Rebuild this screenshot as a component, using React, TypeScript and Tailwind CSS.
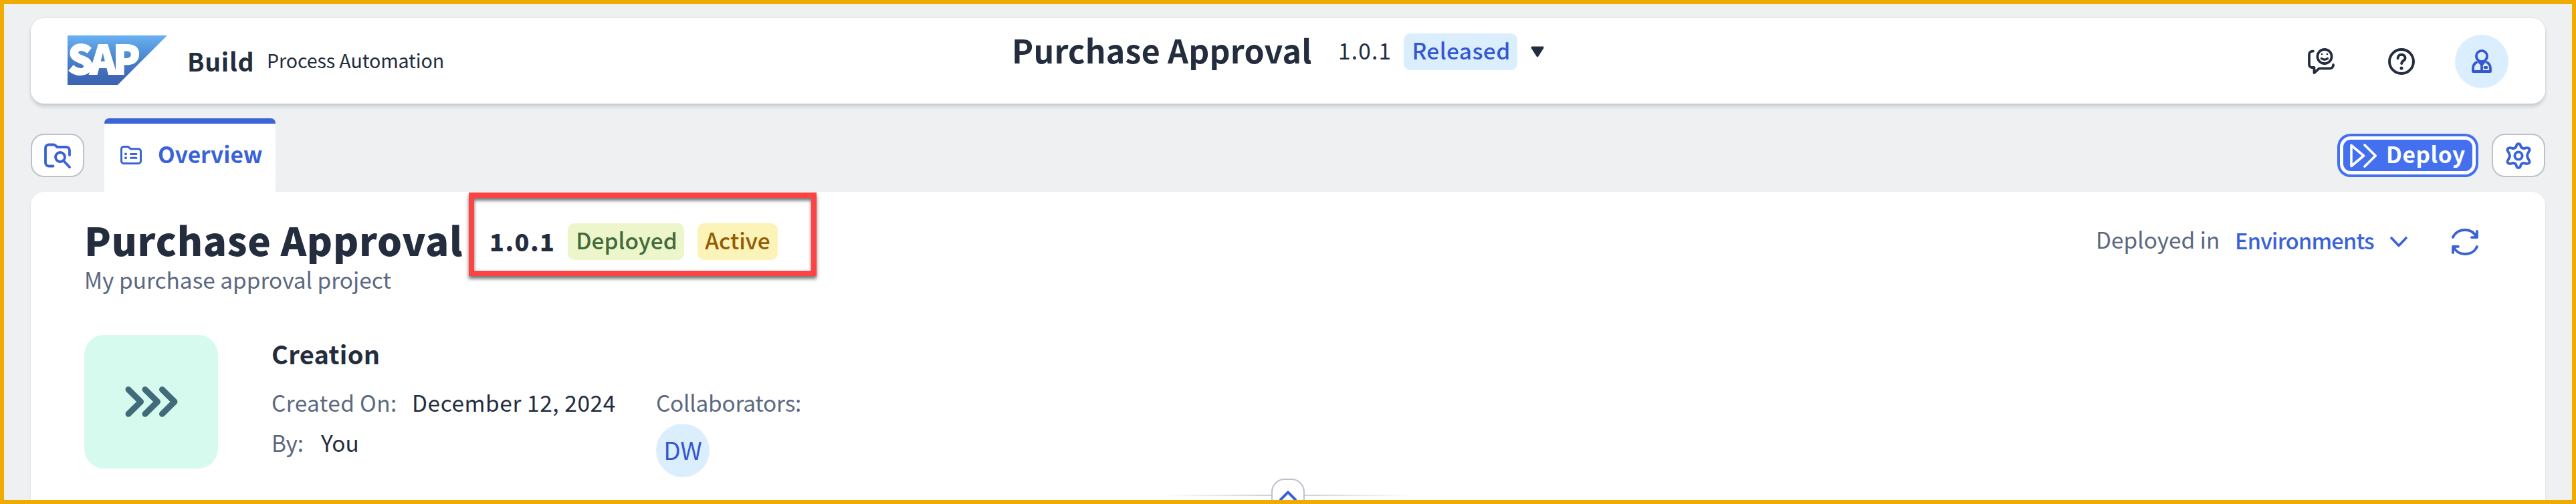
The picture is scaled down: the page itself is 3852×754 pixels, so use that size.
import React from "react";

const BLUE = "#3a62d8";
const INK = "#232d3e";

function SapLogo() {
  return (
    <svg width="149" height="74" viewBox="0 0 149 74" className="block shrink-0 overflow-visible">
      <defs>
        <linearGradient id="sap" x1="0" y1="0" x2="0" y2="1">
          <stop offset="0" stopColor="#68b1f3" />
          <stop offset="0.5" stopColor="#4a82ca" />
          <stop offset="0.8" stopColor="#3f6ab8" />
          <stop offset="1" stopColor="#3b63b2" />
        </linearGradient>
      </defs>
      <path d="M0 0H149L75 74H0Z" fill="url(#sap)" />
      <text
        x="0.5"
        y="58"
        fontFamily="'Noto Sans CJK JP', 'Noto Sans', sans-serif"
        fontWeight="900"
        fontSize="59"
        textLength="108"
        lengthAdjust="spacing"
        fill="#fff"
        stroke="#fff"
        strokeWidth="2"
      >
        SAP
      </text>
    </svg>
  );
}

function FeedbackIcon() {
  return (
    <svg width="40" height="40" viewBox="0 0 40 40" fill="none" stroke={INK} strokeWidth="3.8" strokeLinecap="round" strokeLinejoin="round">
      <path d="M8 4.6H7A5 5 0 0 0 2 9.6V24.5A4.5 4.5 0 0 0 6.5 29H9.500V37L17 30.400H33A5 5 0 0 0 38 25.500V25" />
      <circle cx="25" cy="12.5" r="10.6" />
      <path d="M20.500 15.500Q25 19 29.500 15.500" strokeWidth="3.4" />
      <circle cx="21" cy="9" r="1.3" fill={INK} stroke="none" />
      <circle cx="29" cy="9" r="1.3" fill={INK} stroke="none" />
    </svg>
  );
}

function HelpIcon() {
  return (
    <svg width="40" height="40" viewBox="0 0 40 40" fill="none" stroke={INK} strokeWidth="3.9" strokeLinecap="round" strokeLinejoin="round">
      <circle cx="20" cy="20" r="18" />
      <path d="M14.600 15.200C14.600 11.500 17 9.800 20 9.800C23.200 9.800 25.600 12 25.600 15C25.600 19 20.200 18.800 20.200 23" />
      <circle cx="20" cy="30" r="2.5" fill={INK} stroke="none" />
    </svg>
  );
}

function PersonIcon() {
  return (
    <svg width="30" height="36" viewBox="0 0 30 36" fill="none" stroke="#3558d0" strokeWidth="3.8" strokeLinejoin="round">
      <circle cx="15" cy="10" r="8.1" />
      <path d="M8.500 18.500C4 20.500 2 24 2 28V33H28V28C28 24 26 20.500 21.500 18.500" />
      <path d="M9 18.500L15 25L21 18.500Z" fill="#3558d0" strokeWidth="1" />
      <path d="M15 22V33" />
      <path d="M19.500 27H22.500" strokeLinecap="round" />
    </svg>
  );
}

function FolderSearchIcon() {
  return (
    <svg width="40" height="38" viewBox="0 0 40 38" fill="none" stroke={BLUE} strokeWidth="3.8" strokeLinecap="round" strokeLinejoin="round">
      <path d="M13.500 34.500H7A5 5 0 0 1 2 29.500V7.500A5 5 0 0 1 7 2.500H14.500C15.500 2.500 16 2.800 16.700 3.500L19.500 6H33A5 5 0 0 1 38 11V18" />
      <circle cx="24" cy="21" r="7" />
      <path d="M29.500 27L38 36" />
    </svg>
  );
}

function OverviewIcon() {
  return (
    <svg width="32" height="28" viewBox="0 0 32 28" fill="none" stroke={BLUE} strokeWidth="3" strokeLinecap="round" strokeLinejoin="round">
      <path d="M5 1.500H11.500L15.500 4.800H27A3.500 3.500 0 0 1 30.500 8.300V23A3.500 3.500 0 0 1 27 26.500H5A3.500 3.500 0 0 1 1.500 23V5A3.500 3.500 0 0 1 5 1.500Z" />
      <path d="M15.500 12.500H24M15.500 18.200H24" />
      <path d="M6.300 10.700H9.700V14.100H6.300ZM6.300 16.500H9.700V19.900H6.300Z" fill={BLUE} stroke="none" />
    </svg>
  );
}

function DeployIcon() {
  return (
    <svg width="40" height="36" viewBox="0 0 40 36" fill="none" stroke="#fff" strokeWidth="3.6" strokeLinecap="round" strokeLinejoin="round">
      <path d="M2 2.500V33.500L20.500 18ZM22 2L38.200 18L22 34" />
    </svg>
  );
}

function SettingsIcon() {
  return (
    <svg width="38" height="40" viewBox="0 0 38 40" fill="none" stroke={BLUE} strokeWidth="3.9" strokeLinejoin="round">
      <path d="M16.200 4.200C16.800 1.400 21.200 1.400 21.800 4.200C22.300 8 25.500 9.800 29 8.600C31.600 7.400 35.500 8.600 35.600 11C35.900 13.400 32.500 14.800 32 20C32.500 25.200 35.900 26.600 35.600 29C35.500 31.400 31.600 32.600 29 31.400C25.500 30.200 22.300 32 21.800 35.800C21.200 38.600 16.800 38.600 16.200 35.800C15.700 32 12.500 30.200 9 31.400C6.400 32.600 2.500 31.400 2.400 29C2.100 26.600 5.500 25.200 6 20C5.500 14.800 2.100 13.400 2.400 11C2.500 8.600 6.400 7.400 9 8.600C12.500 9.800 15.700 8 16.200 4.200Z" />
      <circle cx="19" cy="20" r="5.6" />
    </svg>
  );
}

function RefreshIcon() {
  return (
    <svg width="40" height="40" viewBox="0 0 40 40" fill="none" stroke={BLUE} strokeWidth="3.8" strokeLinecap="round" strokeLinejoin="round">
      <path d="M2 13C5 6 12 2 20 2C28 2 34 6 37 12.500M38 4V13.200H30" />
      <path d="M38 27C35 34 28 38 20 38C12 38 6 34 3 27.500M2 36V26.800H10" />
    </svg>
  );
}

function Header() {
  return (
    <header className="flex h-[128px] rounded-[20px] bg-white shadow-[0_5px_5px_rgba(34,53,72,0.16),0_0_3px_rgba(34,53,72,0.12)]">
      <div className="ml-[55px] flex h-[125px] w-[1412px] items-center">
        <div className="flex w-[179px] items-start">
          <SapLogo />
        </div>
        <span className="mt-[2px] w-[119px] text-[37.5px] font-bold tracking-[0.7px]">Build</span>
        <span className="mt-[2px] text-[28.6px] tracking-[-0.1px]">Process Automation</span>
      </div>
      <div className="flex h-[93px] items-center">
        <span className="mt-[2px] w-[488px] text-[48.3px] font-bold tracking-[0.2px]">Purchase Approval</span>
        <span className="mt-[3px] w-[98px] text-[33.4px] tracking-[1.2px]">1.0.1</span>
        <span className="mt-[8px] flex h-[55px] w-[170px] items-center justify-center rounded-[10px] bg-[#dbeefe] pb-[5px] pl-[2px] text-[33.4px] font-medium tracking-[0.4px] text-[#3558d0]">
          Released
        </span>
        <svg width="20" height="17" viewBox="0 0 20 17" className="ml-5 mt-[7px]">
          <path d="M1.500 0.500H18.500Q20 1.500 19.300 3L11.300 15.500Q10 17 8.700 15.500L0.700 3Q0 1.500 1.500 0.500Z" fill={INK} />
        </svg>
      </div>
      <div className="ml-auto mr-[55px] flex h-[130px] items-center">
        <FeedbackIcon />
        <div className="ml-20">
          <HelpIcon />
        </div>
        <div className="ml-[60px] flex size-20 items-center justify-center rounded-full bg-[#dbeefe]">
          <PersonIcon />
        </div>
      </div>
    </header>
  );
}

function Toolbar() {
  return (
    <div className="relative z-10 mt-[22px] flex h-[110px]">
      <button className="mt-[23px] flex h-[65px] w-20 items-center justify-center rounded-[20px] border-2 border-[#bcc2cb] bg-white">
        <FolderSearchIcon />
      </button>
      <div className="ml-[30px] flex h-[110px] w-64 overflow-hidden rounded-t-[7px] border-t-8 border-[#3c64d9] bg-white pl-6">
        <div className="flex h-[94px] items-center">
          <OverviewIcon />
          <span className="ml-6 pb-[5px] text-[33.4px] font-bold" style={{ color: BLUE }}>
            Overview
          </span>
        </div>
      </div>
      <button className="ml-auto mt-[23px] flex h-[65px] w-[211px] rounded-[20px] bg-[#4470f0] p-1">
        <span className="flex h-[57px] w-[203px] items-center rounded-[16px] border-[5px] border-white pl-[10px] text-white">
          <DeployIcon />
          <span className="ml-[14px] pb-[5px] text-[33.4px] font-bold tracking-[0.6px]">Deploy</span>
        </span>
      </button>
      <button className="ml-5 mt-[23px] flex h-[65px] w-20 items-center justify-center rounded-[20px] border-2 border-[#bcc2cb] bg-white">
        <SettingsIcon />
      </button>
    </div>
  );
}

function TitleRow() {
  return (
    <div className="mt-10 flex h-[60px] items-center">
      <h1 className="mt-[2px] w-[606px] text-[58.3px] font-black tracking-[0.7px]">Purchase Approval</h1>
      <span className="mt-[5px] w-[117px] text-[36px] font-black tracking-[1.5px]">1.0.1</span>
      <span className="mt-[9px] flex h-[55px] w-[174px] items-center justify-center rounded-[10px] bg-[#edf5cb] pb-[5px] pl-[2px] text-[33.4px] font-medium text-[#426a3c]">
        Deployed
      </span>
      <span className="ml-5 mt-[9px] flex h-[55px] w-[120px] items-center justify-center rounded-[10px] bg-[#fcf3b8] pb-[5px] text-[33.4px] font-medium text-[#925b05]">
        Active
      </span>
      <div className="ml-auto mr-[100px] flex items-center">
        <span className="mt-px w-[208px] text-[33.4px] text-[#5b6880]">Deployed in</span>
        <span className="mt-[4px] w-[232px] text-[32.5px] font-medium tracking-[-0.8px]" style={{ color: BLUE }}>
          Environments
        </span>
        <svg width="26" height="16" viewBox="0 0 26 16" fill="none" stroke={BLUE} strokeWidth="3.6" strokeLinecap="round" strokeLinejoin="round" className="mt-[9px]">
          <path d="M2 2L13 13.500L24 2" />
        </svg>
        <div className="ml-[66px] mt-[9px]">
          <RefreshIcon />
        </div>
      </div>
    </div>
  );
}

function Details() {
  return (
    <div className="mt-16 flex">
      <div className="flex size-[200px] items-center justify-center rounded-[30px] bg-[#d6fbee]">
        <svg width="80" height="46" viewBox="0 0 80 46" fill="none" stroke="#416b7b" strokeWidth="9" strokeLinecap="round" strokeLinejoin="round" className="ml-px">
          <path d="M5 4.700L23.500 23L5 41.300M30 4.700L48.500 23L30 41.300M55.500 4.700L74 23L55.500 41.300" />
        </svg>
      </div>
      <div className="ml-[80px] flex w-[575px] flex-col">
        <h2 className="mt-2 flex h-10 items-center text-[38px] font-bold tracking-[0.3px]">Creation</h2>
        <div className="mt-[33px] flex h-10 items-center text-[33.4px]">
          <span className="w-[210px] tracking-[0.4px] text-[#5b6880]">Created On:</span>
          <span className="tracking-[0.6px]">December 12, 2024</span>
        </div>
        <div className="mt-5 flex h-10 items-center text-[33.4px]">
          <span className="w-[74px] text-[#5b6880]">By:</span>
          <span>You</span>
        </div>
      </div>
      <div className="flex flex-col pt-[81px]">
        <span className="flex h-10 items-center text-[33.4px] tracking-[-0.25px] text-[#5b6880]">Collaborators:</span>
        <span className="mt-3 flex size-20 items-center justify-center rounded-full bg-[#dbeefe] pb-1 text-[37px] text-[#3558d0]">
          DW
        </span>
      </div>
    </div>
  );
}

export default function App() {
  return (
    <div
      className="flex h-[754px] w-[3852px] flex-col overflow-hidden whitespace-nowrap border-[6px] border-[#f0ab00] bg-[#eff0f2] px-10 pt-[21px] leading-none text-[#232d3e]"
      style={{ fontFamily: "'Noto Sans CJK JP', 'Noto Sans', sans-serif" }}
    >
      <Header />
      <Toolbar />
      <main className="relative h-[461px] overflow-hidden rounded-t-[20px] bg-white pl-20 shadow-[0_2px_3px_rgba(34,53,72,0.14)]">
        <TitleRow />
        <p className="mt-[11px] flex h-10 items-center text-[33.4px] text-[#5b6880]">My purchase approval project</p>
        <div className="-mt-px">
          <Details />
        </div>
        <div className="absolute left-[655px] top-px h-[125px] w-[520px] border-8 border-[#fd4343] shadow-[0_4px_5px_rgba(0,0,0,0.55),inset_0_4px_5px_rgba(0,0,0,0.55)]" />
        <div className="absolute left-[1693px] top-[429px] flex w-[374px] justify-center">
          <div className="mt-6 h-[2px] w-[162px] bg-linear-to-r from-transparent to-[#d0d0d0]" />
          <div className="flex h-[50px] w-[50px] shrink-0 justify-center rounded-[20px] border-2 border-[#bcc2cb] bg-white pt-4">
            <svg width="26" height="16" viewBox="0 0 26 16" fill="none" stroke={BLUE} strokeWidth="4" strokeLinecap="round" strokeLinejoin="round">
              <path d="M2 13.500L13 2.300L24 13.500" />
            </svg>
          </div>
          <div className="mt-6 h-[2px] w-[162px] bg-linear-to-l from-transparent to-[#d0d0d0]" />
        </div>
      </main>
    </div>
  );
}
